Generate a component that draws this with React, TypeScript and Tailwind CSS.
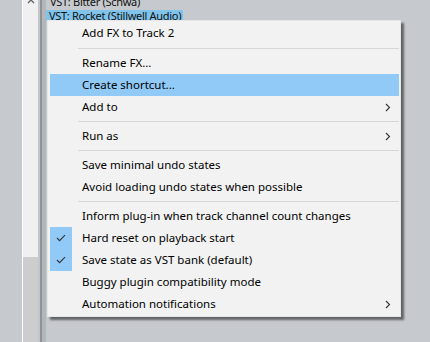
const font = { fontFamily: '"Noto Sans", "Segoe UI", sans-serif' };

type Item =
  | { kind: "item"; label: string; sub?: boolean; checked?: boolean; hover?: boolean }
  | { kind: "sep"; h: 7 | 8 };

const items: Item[] = [
  { kind: "item", label: "Add FX to Track 2" },
  { kind: "sep", h: 8 },
  { kind: "item", label: "Rename FX..." },
  { kind: "item", label: "Create shortcut...", hover: true },
  { kind: "item", label: "Add to", sub: true },
  { kind: "sep", h: 7 },
  { kind: "item", label: "Run as", sub: true },
  { kind: "sep", h: 7 },
  { kind: "item", label: "Save minimal undo states" },
  { kind: "item", label: "Avoid loading undo states when possible" },
  { kind: "sep", h: 7 },
  { kind: "item", label: "Inform plug-in when track channel count changes" },
  { kind: "item", label: "Hard reset on playback start", checked: true },
  { kind: "item", label: "Save state as VST bank (default)", checked: true },
  { kind: "item", label: "Buggy plugin compatibility mode" },
  { kind: "item", label: "Automation notifications", sub: true },
];

function Check() {
  return (
    <svg width="10" height="8" viewBox="0 0 10 8" fill="none">
      <path d="M1 4 L3.6 6.6 L9 1.2" stroke="#333" strokeWidth="1.1" />
    </svg>
  );
}

function Chevron() {
  return (
    <svg width="6" height="9" viewBox="0 0 6 9" fill="none">
      <path d="M1 1 L4.5 4.5 L1 8" stroke="#333" strokeWidth="1.1" />
    </svg>
  );
}

function MenuRow({ item }: { item: Extract<Item, { kind: "item" }> }) {
  return (
    <div className={`flex h-[22px] items-center ${item.hover ? "bg-[#91c9f7]" : ""}`}>
      <div
        className={`flex h-full w-[22px] items-center justify-center ${
          item.checked ? "bg-[#91c9f7]" : ""
        }`}
      >
        {item.checked ? <Check /> : null}
      </div>
      <span className="ml-[10px] flex-1 text-[11.5px] text-black">{item.label}</span>
      {item.sub ? (
        <div className="mr-[8px] flex items-center">
          <Chevron />
        </div>
      ) : null}
    </div>
  );
}

export default function App() {
  return (
    <div className="flex h-[342px] w-[430px] overflow-hidden bg-[#c6c9cd]" style={font}>
      <div className="w-[22px] bg-[#c6c9cd]" />
      <div className="w-px bg-white" />
      {/* scrollbar */}
      <div className="flex w-[15px] flex-col bg-[#f0f0f0]">
        <div className="flex h-[6px] items-start justify-center overflow-hidden">
          <svg width="8" height="6" viewBox="0 0 8 6" fill="none" className="-mt-[2px]">
            <path d="M1 5 L4 2 L7 5" stroke="#606060" strokeWidth="1.3" />
          </svg>
        </div>
        <div className="flex-1" />
        <div className="h-[85px] bg-[#cdcdcd]" />
      </div>
      <div className="w-[2px] bg-[#c3c6ca]" />
      <div className="w-[2px] bg-[#8f9297]" />
      <div className="w-[4px] bg-[#b3b6ba]" />

      <div className="relative flex-1">
        <div className="-mt-[4px] flex flex-col text-[11px] leading-[11px] tracking-[-0.3px] text-[#111]">
          <div className="h-[14px] px-[4px]">VST: Bitter (Schwa)</div>
          <div className="h-[11px] w-fit bg-[#80c4ec] pl-[3px] pr-[2px]">VST: Rocket (Stillwell Audio)</div>
        </div>

        <div className="absolute left-px top-[20px] w-[354px] border border-[#e6e6e6] bg-[#f2f2f2] py-px pl-[2px] pr-px shadow-[3px_3px_2px_rgba(0,0,0,0.5)]">
          {items.map((item, i) =>
            item.kind === "sep" ? (
              <div key={i} className={`flex ${item.h === 8 ? "h-[8px] pt-[4px]" : "h-[7px] pt-[3px]"}`}>
                <div className="ml-[28px] h-px flex-1 bg-[#d7d7d7]" />
              </div>
            ) : (
              <MenuRow key={i} item={item} />
            )
          )}
        </div>
      </div>
    </div>
  );
}
